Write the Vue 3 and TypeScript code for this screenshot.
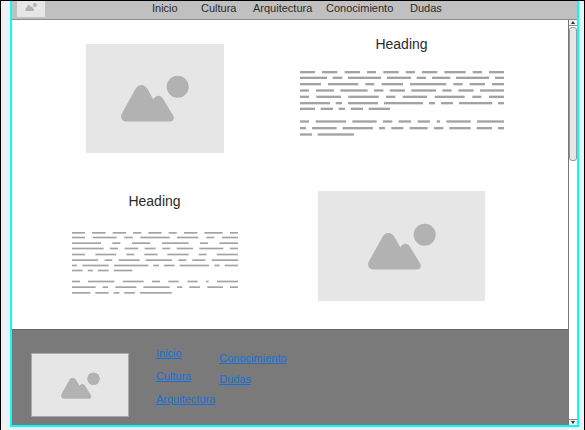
<script setup lang="ts">
type Segment = [number, number]

interface TextLine {
  y: number
  segments: Segment[]
}

const sections: string[] = ['Inicio', 'Cultura', 'Arquitectura', 'Conocimiento', 'Dudas']
const footerGroups: string[][] = [sections.slice(0, 3), sections.slice(3)]

// Each segment is [start, end], in thirds of a pixel.
const wideText: TextLine[] = [
  { y: 4, segments: [[0, 45], [66, 112], [134, 180], [201, 228], [250, 296], [317, 345], [366, 412], [433, 497], [518, 546], [567, 612]] },
  { y: 21, segments: [[0, 81], [98, 127], [144, 243], [261, 333], [350, 378], [396, 451], [468, 567], [585, 612]] },
  { y: 40, segments: [[0, 63], [84, 175], [196, 223], [245, 309], [330, 439], [460, 488], [509, 555], [576, 612]] },
  { y: 59, segments: [[0, 27], [48, 102], [121, 203], [222, 250], [269, 315], [334, 408], [427, 455], [475, 521], [540, 612]] },
  { y: 78, segments: [[0, 27], [49, 123], [145, 236], [258, 286], [308, 381], [404, 494], [517, 544], [567, 612]] },
  { y: 97, segments: [[0, 90], [107, 126], [144, 234], [252, 369], [387, 405], [423, 459], [477, 577], [594, 612]] },
  { y: 114, segments: [[0, 45], [62, 99], [116, 135], [152, 189], [206, 270]] },
  { y: 152, segments: [[0, 27], [47, 138], [157, 230], [249, 277], [296, 333], [353, 390], [410, 420], [439, 512], [531, 612]] },
  { y: 172, segments: [[0, 18], [36, 110], [128, 219], [237, 255], [274, 310], [329, 383], [402, 430], [448, 512], [530, 576], [594, 612]] },
  { y: 191, segments: [[0, 36], [53, 162]] },
]

const narrowText: TextLine[] = [
  { y: 3, segments: [[0, 39], [60, 101], [122, 162], [183, 208], [229, 269], [290, 314], [336, 376], [397, 452], [474, 498]] },
  { y: 17, segments: [[0, 39], [62, 134], [157, 182], [205, 293], [315, 379], [403, 427], [450, 498]] },
  { y: 34, segments: [[0, 87], [121, 145], [180, 235], [270, 350], [384, 408], [442, 498]] },
  { y: 50, segments: [[0, 95], [114, 138], [158, 198], [218, 251], [271, 295], [314, 363], [382, 454], [474, 498]] },
  { y: 68, segments: [[0, 39], [70, 133], [163, 187], [217, 257], [286, 350], [380, 404], [434, 498]] },
  { y: 85, segments: [[0, 78], [98, 121], [140, 203], [221, 300], [319, 343], [361, 400], [419, 498]] },
  { y: 101, segments: [[0, 15], [31, 110], [126, 229], [244, 261], [276, 308], [323, 411], [427, 443], [458, 498]] },
  { y: 116, segments: [[0, 32], [47, 63], [78, 110], [125, 181]] },
  { y: 149, segments: [[0, 24], [48, 127], [152, 215], [240, 264], [289, 320], [346, 377], [402, 410], [435, 498]] },
  { y: 166, segments: [[0, 71], [92, 108], [130, 193], [214, 293], [315, 331], [352, 384], [406, 453], [474, 498]] },
  { y: 183, segments: [[0, 55], [70, 110], [125, 142], [157, 189], [204, 299]] },
]
</script>

<template>
  <svg class="symbols" aria-hidden="true">
    <symbol id="landscape" viewBox="0 0 204 140">
      <path
        d="M20 139C3 139-4 127 3 114L43 42C52 25 70 25 80 42L97 73C104 59 118 58 126 71L156 120C162 130 157 139 146 139Z"
      />
      <circle cx="170" cy="35" r="33" />
    </symbol>
  </svg>

  <div class="frame">
    <div class="window">
      <header class="header">
        <div class="picture logo"><svg><use href="#landscape" /></svg></div>
        <nav class="nav">
          <a v-for="name in sections" :key="name" href="#">{{ name }}</a>
        </nav>
      </header>

      <div class="viewport">
        <div class="content">
          <main class="main">
            <div class="picture first"><svg><use href="#landscape" /></svg></div>
            <section class="article">
              <h2>Heading</h2>
              <svg class="text wide" viewBox="0 0 612 198">
                <g v-for="line in wideText" :key="line.y">
                  <rect v-for="s in line.segments" :key="s[0]" :x="s[0]" :y="line.y - 4" :width="s[1] - s[0]" height="7" />
                </g>
              </svg>
            </section>
            <section class="article narrow">
              <h2>Heading</h2>
              <svg class="text" viewBox="0 0 498 186">
                <g v-for="line in narrowText" :key="line.y">
                  <rect v-for="s in line.segments" :key="s[0]" :x="s[0]" :y="line.y - 3" :width="s[1] - s[0]" height="5" />
                </g>
              </svg>
            </section>
            <div class="picture second"><svg><use href="#landscape" /></svg></div>
          </main>

          <footer class="footer">
            <div class="picture badge"><svg><use href="#landscape" /></svg></div>
            <ul v-for="(group, index) in footerGroups" :key="index" class="links">
              <li v-for="name in group" :key="name"><a href="#">{{ name }}</a></li>
            </ul>
          </footer>
        </div>

        <div class="scrollbar">
          <button type="button" aria-label="Subir"><svg viewBox="0 0 4 3"><path d="M2 0L4 3H0Z" /></svg></button>
          <div class="track"><div class="thumb"></div></div>
          <button type="button" aria-label="Bajar"><svg viewBox="0 0 4 3"><path d="M0 0H4L2 3Z" /></svg></button>
        </div>
      </div>
    </div>
  </div>
</template>

<style>
body {
  margin: 0;
}
</style>

<style scoped>
.symbols {
  position: absolute;
  width: 0;
  height: 0;
}

.frame {
  box-sizing: border-box;
  display: flex;
  min-height: 100vh;
  padding: 0 5px 3px 9px;
  border: 1px solid #000;
  background: #f0f0f7;
  color: #2b2b2b;
  font-family: "Liberation Sans", Arial, sans-serif;
  font-size: 11px;
  line-height: 14px;
}

.window {
  flex: 1;
  display: flex;
  flex-direction: column;
  border: solid #00ffff;
  border-width: 0 2px 2px;
  background: #fff;
}

.header {
  display: flex;
  align-items: flex-end;
  box-sizing: border-box;
  height: 19px;
  padding: 0 5px 2px;
  border-bottom: 1px solid #8c8c8c;
  background: #c0c0c0;
  overflow: hidden;
}

.nav {
  display: grid;
  grid-template-columns: 49px 52px 73px 84px auto;
  margin: 0 0 2px 107px;
}

.nav a {
  color: inherit;
  text-decoration: none;
}

.picture {
  display: flex;
  align-items: center;
  justify-content: center;
  box-sizing: border-box;
  background: #e6e6e6;
}

.picture svg {
  width: 68px;
  height: 47px;
  fill: #b2b2b2;
}

.logo {
  width: 28px;
  height: 20px;
}

.logo svg {
  width: 12px;
  height: 8px;
}

.viewport {
  flex: 1;
  display: flex;
}

.content {
  flex: 1;
  display: flex;
  flex-direction: column;
}

.main {
  flex: 1;
  display: grid;
  grid-template-columns: 1fr 1fr;
  align-content: start;
  justify-items: center;
  row-gap: 38px;
  padding: 14px 43px 28px 19px;
}

.first {
  width: 138px;
  height: 109px;
  margin-top: 10px;
}

.second {
  width: 167px;
  height: 110px;
}

.article {
  display: flex;
  flex-direction: column;
  align-items: center;
  gap: 17px;
}

.article.narrow {
  gap: 21px;
}

h2 {
  margin: 0;
  font-size: 14px;
  font-weight: 400;
  line-height: 20px;
}

.text {
  width: 166px;
  height: 62px;
  fill: #a3a3a3;
}

.text.wide {
  width: 204px;
  height: 66px;
}

.footer {
  display: flex;
  align-items: flex-start;
  padding: 23px 19px 8px;
  border-top: 1px solid #666;
  background: #7a7a7a;
}

.badge {
  width: 98px;
  height: 64px;
  border: 1px solid #aaa;
}

.badge svg {
  width: 39px;
  height: 27px;
}

.links {
  display: grid;
  row-gap: 9px;
  margin: -7px 0 0 27px;
  padding: 0;
  list-style: none;
}

.links + .links {
  row-gap: 7px;
  margin: -2px 0 0 4px;
}

.links a {
  color: #1a6fd8;
}

.scrollbar {
  display: flex;
  flex-direction: column;
  width: 8px;
  border-left: 1px solid #777;
}

.scrollbar button {
  display: flex;
  align-items: center;
  justify-content: center;
  box-sizing: border-box;
  height: 6px;
  padding: 0;
  border: 0;
  border-bottom: 1px solid #888;
  background: #eee;
}

.scrollbar svg {
  width: 4px;
  height: 3px;
  fill: #333;
}

.track {
  flex: 1;
}

.thumb {
  box-sizing: border-box;
  height: 34%;
  margin-top: 1px;
  border: 1px solid #999;
  border-radius: 3px;
  background: #e6e6e6;
}

.scrollbar .track + button {
  border-top: 1px solid #888;
  border-bottom: 0;
}
</style>
